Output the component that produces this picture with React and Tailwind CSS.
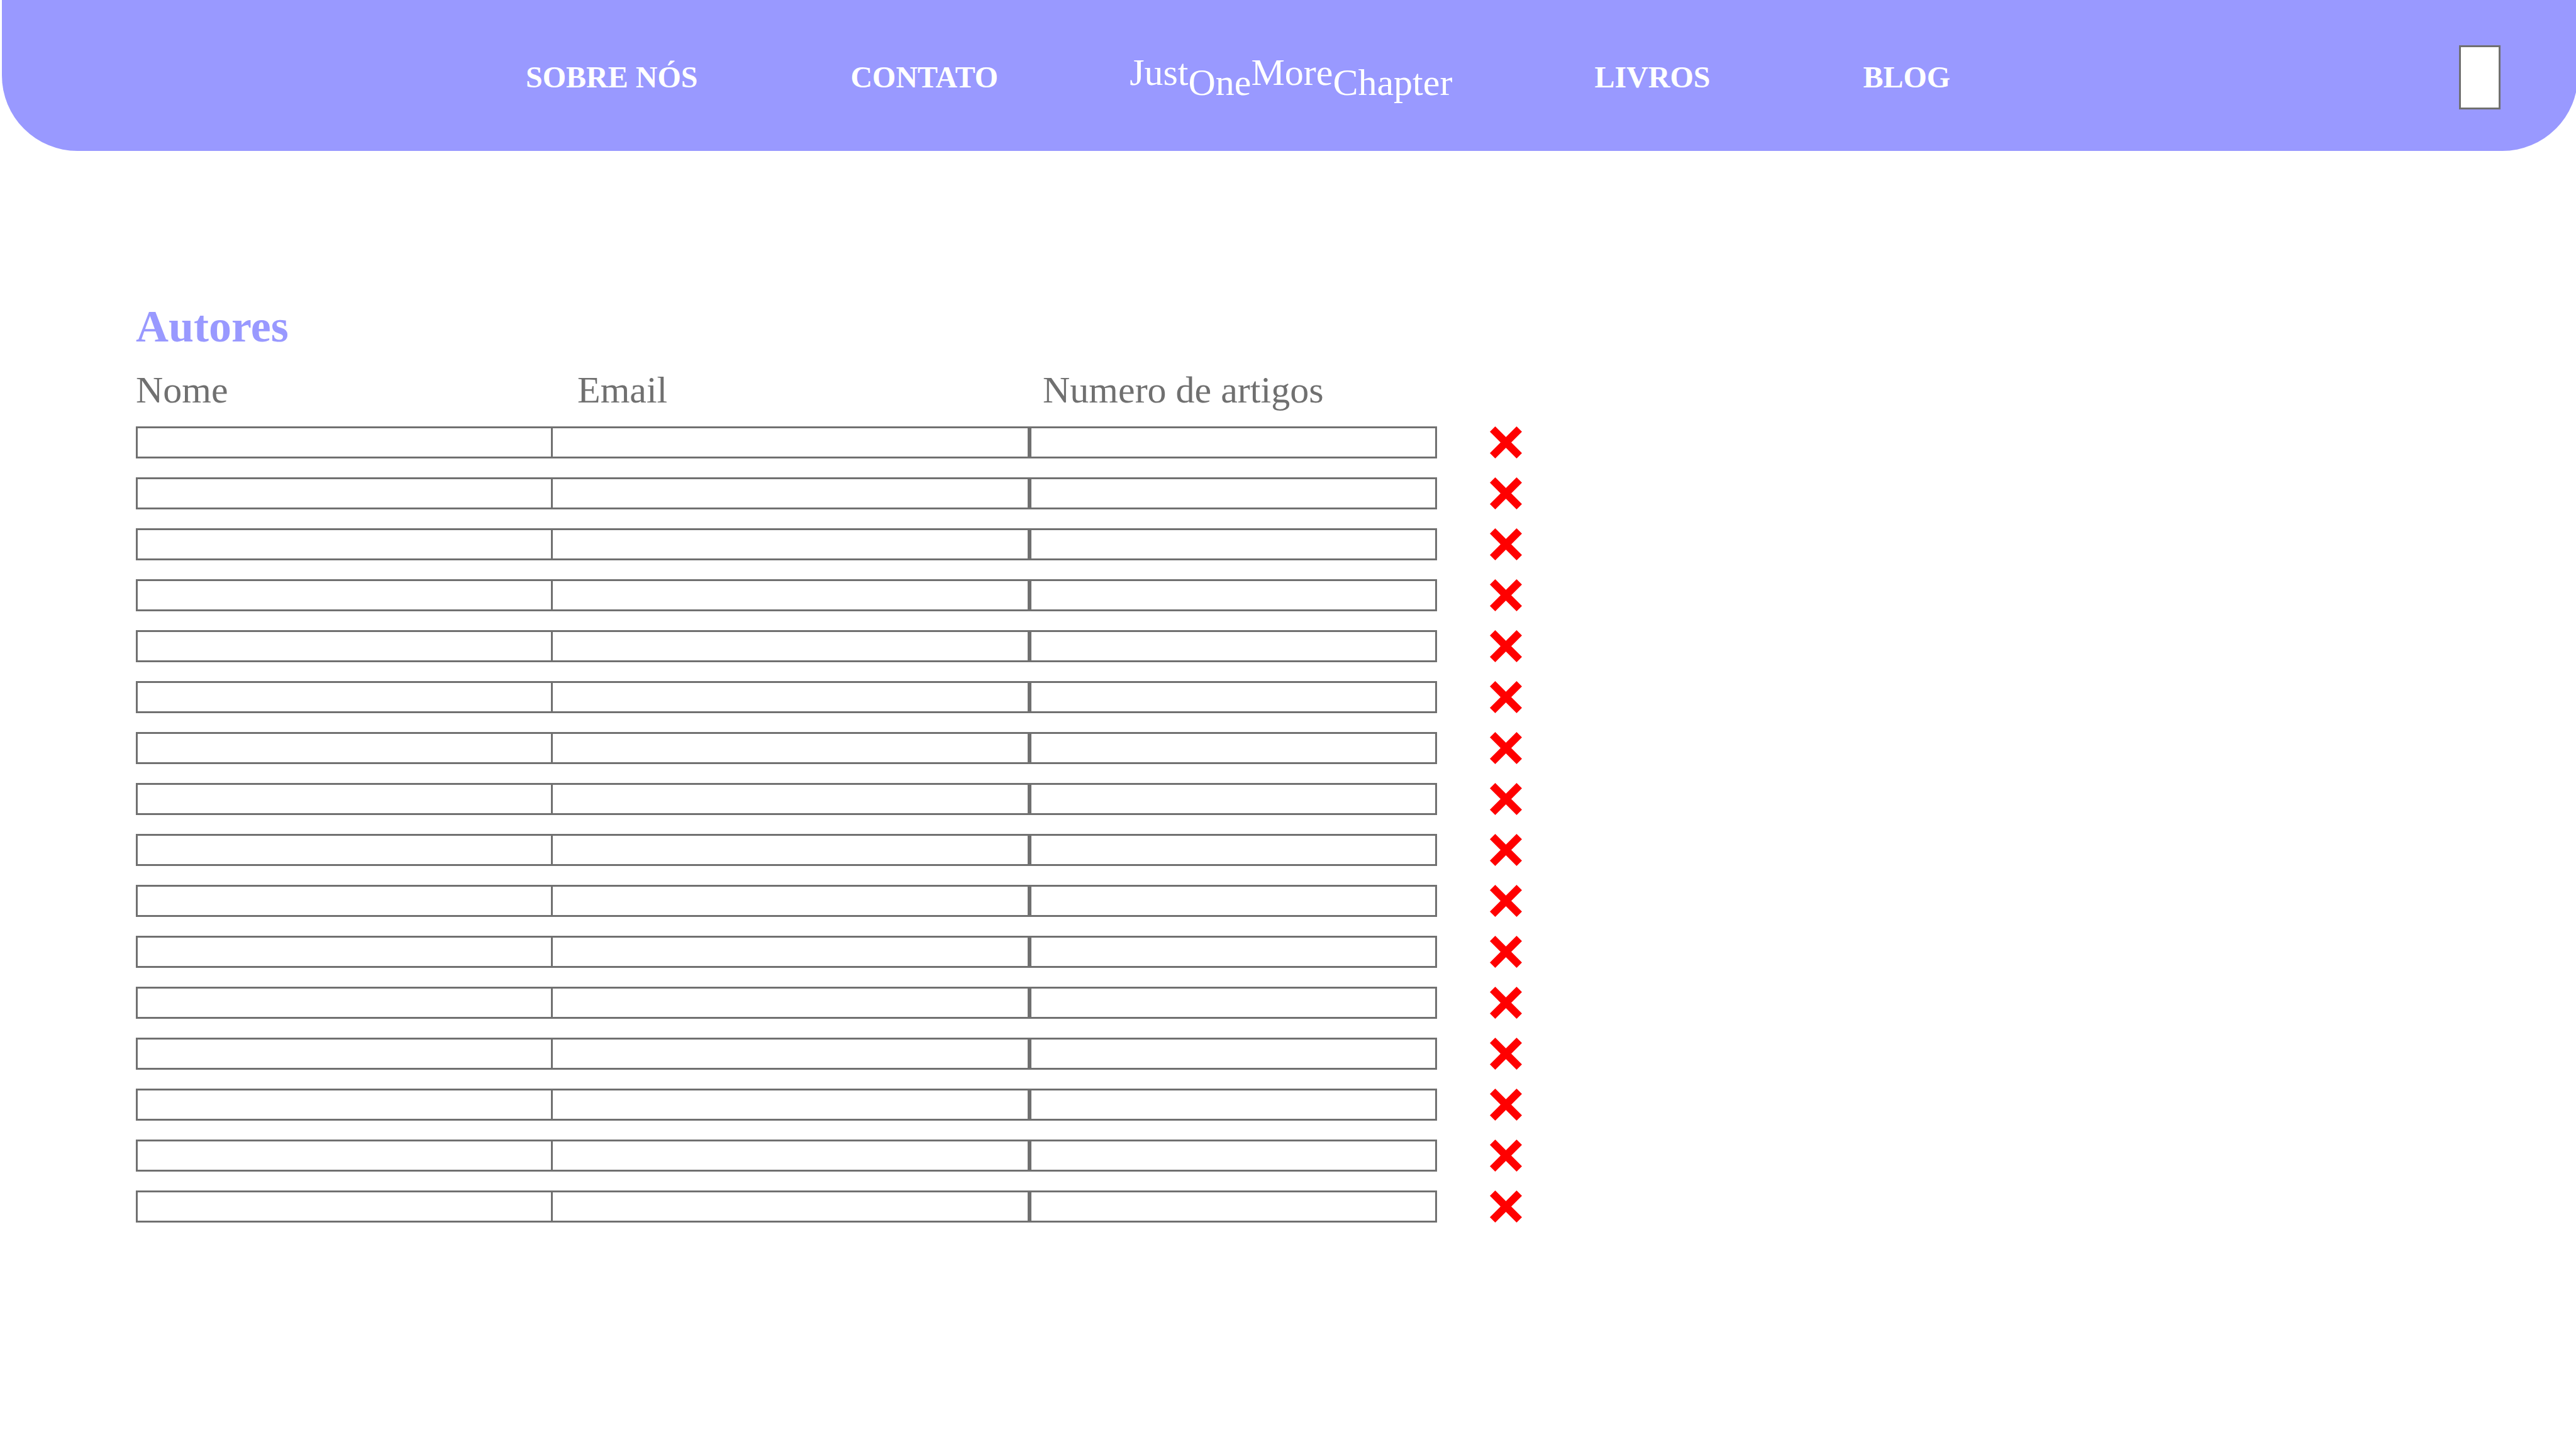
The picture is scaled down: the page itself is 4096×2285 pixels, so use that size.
import React from "react";

const rows = Array.from({ length: 16 }, (_, i) => i + 1);

function CrossIcon() {
  return (
    <svg viewBox="0 0 24 24" className="block size-[51px] fill-[#ff0000]" aria-hidden="true">
      <path d="M4 0 12 8 20 0 24 4 16 12 24 20 20 24 12 16 4 24 0 20 8 12 0 4Z" />
    </svg>
  );
}

function Header() {
  return (
    <header className="ml-[3px] -mr-[3px] flex h-60 items-center justify-between rounded-b-[120px] bg-[#9999ff] pt-1.5 pr-[123px] pl-[833px]">
      <nav className="flex items-center text-[48px] leading-[48px] font-bold whitespace-nowrap text-white">
        <div className="flex gap-[243px]">
          <a href="#sobre">SOBRE NÓS</a>
          <a href="#contato">CONTATO</a>
        </div>
        <a
          href="#inicio"
          aria-label="JustOneMoreChapter"
          className="mr-[226px] ml-[209px] flex items-start text-[60px] leading-[60px] font-normal"
        >
          <span>Just</span>
          <span className="pt-4">One</span>
          <span>More</span>
          <span className="pt-4">Chapter</span>
        </a>
        <div className="flex gap-[243px]">
          <a href="#livros">LIVROS</a>
          <a href="#blog">BLOG</a>
        </div>
      </nav>
      <button
        type="button"
        aria-label="Menu"
        className="h-[102px] w-[66px] shrink-0 border-3 border-[#707070] bg-white"
      />
    </header>
  );
}

function AuthorsTable() {
  return (
    <table
      aria-labelledby="autores"
      className="mt-3 w-full max-w-[2204px] table-fixed border-separate border-spacing-x-0 border-spacing-y-[30px] text-left text-[#707070]"
    >
      <colgroup>
        <col className="w-[663px]" />
        <col className="w-[758px]" />
        <col className="w-[648px]" />
        <col className="w-[135px]" />
      </colgroup>
      <thead>
        <tr className="text-[60px] leading-[55px]">
          <th scope="col" className="p-0 font-normal">Nome</th>
          <th scope="col" className="p-0 pl-[39px] font-normal">Email</th>
          <th scope="col" className="p-0 pl-[21px] font-normal">Numero de artigos</th>
          <td className="p-0" />
        </tr>
      </thead>
      <tbody>
        {rows.map((n) => (
          <tr key={n}>
            <td className="h-[51px] border-3 border-[#707070] p-0" />
            <td className="h-[51px] border-y-3 border-r-3 border-[#707070] p-0" />
            <td className="h-[51px] border-3 border-[#707070] p-0" />
            <td className="h-[51px] p-0 pl-[84px]">
              <button type="button" aria-label={`Remover autor ${n}`} className="block">
                <CrossIcon />
              </button>
            </td>
          </tr>
        ))}
      </tbody>
    </table>
  );
}

export default function App() {
  return (
    <div className="min-h-screen overflow-hidden bg-white font-['Liberation_Serif','Times_New_Roman',serif]">
      <Header />
      <main className="px-[216px] pt-[247px]">
        <h1 id="autores" className="text-[72px] leading-[64px] font-bold text-[#9999ff]">
          Autores
        </h1>
        <AuthorsTable />
      </main>
    </div>
  );
}
